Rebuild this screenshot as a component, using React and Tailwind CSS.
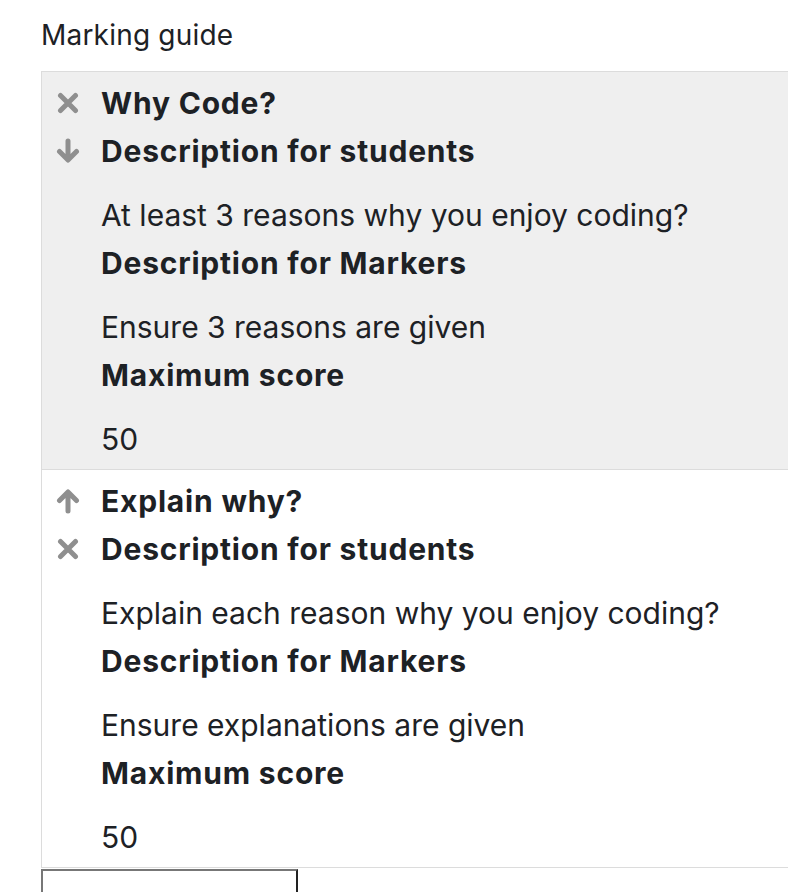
import React from "react";

const criteria = [
  {
    title: "Why Code?",
    icons: ["delete", "down"],
    students: "At least 3 reasons why you enjoy coding?",
    markers: "Ensure 3 reasons are given",
    score: "50",
    shaded: true,
  },
  {
    title: "Explain why?",
    icons: ["up", "delete"],
    students: "Explain each reason why you enjoy coding?",
    markers: "Ensure explanations are given",
    score: "50",
    shaded: false,
  },
];

const Icon = ({ type }) => {
  if (type === "delete") {
    return (
      <svg width="22" height="22" viewBox="0 0 22 22" fill="none">
        <path d="M3.5 3.5 L18.5 18.5 M18.5 3.5 L3.5 18.5" stroke="#8f8f8f" strokeWidth="5" strokeLinecap="round" />
      </svg>
    );
  }
  const up = type === "up";
  return (
    <svg width="24" height="26" viewBox="0 0 24 26" fill="none" style={{ transform: up ? "rotate(180deg)" : "none" }}>
      <path d="M12 3 V21 M3.5 13.5 L12 22 L20.5 13.5" stroke="#8f8f8f" strokeWidth="5" strokeLinecap="round" strokeLinejoin="round" />
    </svg>
  );
};

const Criterion = ({ c, last }) => (
  <div
    className={`flex border-t border-[#dcdcdc] pt-[7px] pb-[6px] ${c.shaded ? "bg-[#efefef]" : "bg-white"} ${last ? "border-b" : ""}`}
  >
    <div className="w-[59px] flex flex-col items-start pl-[14px]">
      {c.icons.map((t, i) => (
        <div key={i} className="h-12 w-6 flex items-center justify-center">
          <Icon type={t} />
        </div>
      ))}
    </div>
    <div className="flex flex-col text-[30px] text-[#1d2125]">
      <div className="h-12 leading-[48px] font-bold tracking-[0.8px]">{c.title}</div>
      <div className="h-12 leading-[48px] font-bold tracking-[0.8px]">Description for students</div>
      <div className="h-12 leading-[48px] mt-4">{c.students}</div>
      <div className="h-12 leading-[48px] font-bold tracking-[0.8px]">Description for Markers</div>
      <div className="h-12 leading-[48px] mt-4">{c.markers}</div>
      <div className="h-12 leading-[48px] font-bold tracking-[0.8px]">Maximum score</div>
      <div className="h-12 leading-[48px] mt-4">{c.score}</div>
    </div>
  </div>
);

export default function App() {
  return (
    <div className="w-[788px] h-[892px] overflow-hidden bg-white" style={{ fontFamily: "Inter, 'Noto Sans', sans-serif" }}>
      <div className="pl-[41px] pt-[14px]">
        <div className="text-[28px] leading-[42px] text-[#1d2125] tracking-[0.2px]">Marking guide</div>
        <div className="mt-[15px] w-[800px] border-l border-[#dcdcdc]">
          {criteria.map((c, i) => (
            <Criterion key={i} c={c} last={i === criteria.length - 1} />
          ))}
        </div>
        <div className="mt-[1px] w-[257px] h-[60px] border-2 border-t-[#777] border-l-[#777] border-r-[#222] border-b-[#222] bg-white" />
      </div>
    </div>
  );
}
